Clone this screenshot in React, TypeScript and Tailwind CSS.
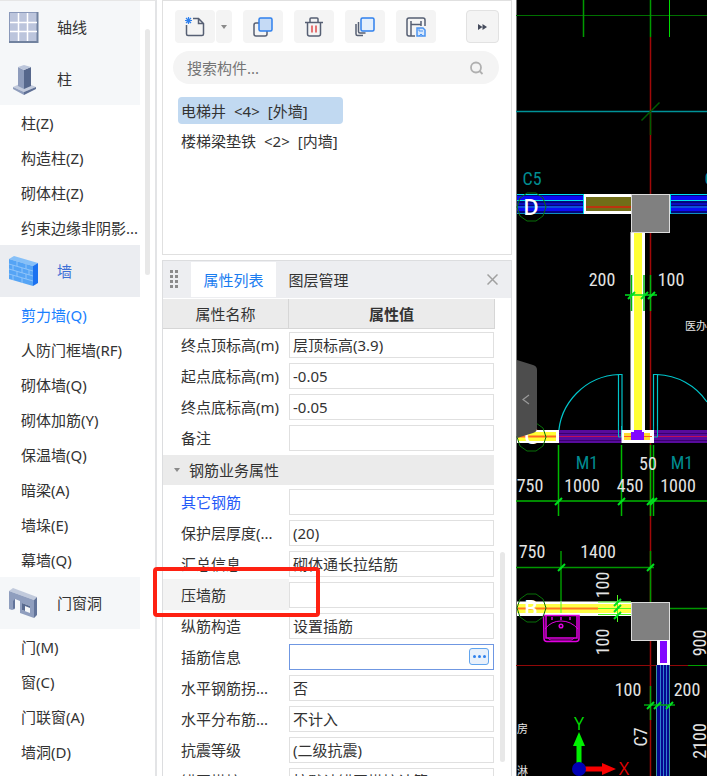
import React, {useState} from 'react';
import classNames from "clsx";

interface IItem {
    name: string;
    tags: string[];
}

interface IGroup {
    title: string;
    icon?: React.ReactNode;
    items: string[];
}

interface IProperty {
    label: string;
    value: string;
    kind?: 'link' | 'hover' | 'active';
}

const GridIcon: React.FC = () => (
    <svg width="30" height="32" viewBox="0 0 30 32">
        <rect x="0.5" y="1.5" width="28" height="29" fill="#bcc5dc" stroke="#8a99ba"/>
        <path d="M28.5 1v30H0" fill="none" stroke="#71829f" strokeWidth="2"/>
        <path d="M9.500 2v28M18.500 2v28M1 11.500h27M1 20.500h27" stroke="#fff" strokeWidth="1.500"/>
    </svg>
);

const ColumnIcon: React.FC = () => (
    <svg width="30" height="32" viewBox="0 0 30 32">
        <path d="M4 24l11-5 12 5-12 5z" fill="#c3cbdd"/>
        <path d="M4 24l11 5v3L4 26z" fill="#8f9dbc"/>
        <path d="M27 24l-12 5v3l12-6z" fill="#5f7095"/>
        <path d="M9 4l6 3v19l-6-3z" fill="#8e9cbc"/>
        <path d="M22 4l-7 3v19l7-3z" fill="#56678c"/>
        <path d="M9 4l6-2 7 2-7 3z" fill="#bcc6db"/>
    </svg>
);

const WallIcon: React.FC = () => (
    <svg width="30" height="32" viewBox="0 0 30 32">
        <path d="M0 4l5-3 24 7-5 3z" fill="#86c0f8"/>
        <path d="M0 4l24 7v20L0 24z" fill="#55a4f5"/>
        <path d="M24 11l5-3v20l-5 3z" fill="#1c72f0"/>
        <path d="M0 9l24 7M0 14l24 7M0 19l24 7M8 6v5M17 9v5M4 10v5M13 13v5M20 15v5M8 16v5M17 19v5M4 20v5M13 23v5" stroke="#8fc4fa" strokeWidth="1" fill="none"/>
    </svg>
);

const OpeningIcon: React.FC = () => (
    <svg width="30" height="32" viewBox="0 0 30 32">
        <path d="M0 4l4-3 24 9-3 3z" fill="#c1cadc"/>
        <path d="M0 4l25 9v18l-14-5V14l-5-2v10l-3 1-3-1z" fill="#8f9ebe"/>
        <path d="M25 13l3-3v18l-3 3zM6 12l-2 2v8l2-1z" fill="#62749a"/>
        <path d="M13 16l8 3v7l-8-3z" fill="#f5f7f9"/>
        <path d="M13 16l8 3v2l-5-2v5l-3-1z" fill="#596b90"/>
    </svg>
);

const groups: IGroup[] = [
    {title: '轴线', icon: <GridIcon/>, items: []},
    {title: '柱', icon: <ColumnIcon/>, items: ['柱(Z)', '构造柱(Z)', '砌体柱(Z)', '约束边缘非阴影...']},
    {
        title: '墙', icon: <WallIcon/>,
        items: ['剪力墙(Q)', '人防门框墙(RF)', '砌体墙(Q)', '砌体加筋(Y)', '保温墙(Q)', '暗梁(A)', '墙垛(E)', '幕墙(Q)']
    },
    {title: '门窗洞', icon: <OpeningIcon/>, items: ['门(M)', '窗(C)', '门联窗(A)', '墙洞(D)']},
];

const levels: IProperty[] = [
    {label: '终点顶标高(m)', value: '层顶标高(3.9)'},
    {label: '起点底标高(m)', value: '-0.05'},
    {label: '终点底标高(m)', value: '-0.05'},
    {label: '备注', value: ''},
];

const rebar: IProperty[] = [
    {label: '其它钢筋', value: '', kind: 'link'},
    {label: '保护层厚度(...', value: '(20)'},
    {label: '汇总信息', value: '砌体通长拉结筋'},
    {label: '压墙筋', value: '', kind: 'hover'},
    {label: '纵筋构造', value: '设置插筋'},
    {label: '插筋信息', value: '', kind: 'active'},
    {label: '水平钢筋拐...', value: '否'},
    {label: '水平分布筋...', value: '不计入'},
    {label: '抗震等级', value: '(二级抗震)'},
    {label: '锚固搭接', value: '按默认锚固搭接计算'},
];

const Sidebar: React.FC = () => {
    const [current, setCurrent] = useState('剪力墙(Q)');

    return (
        <nav className="flex w-[157px] shrink-0 border-t border-r-2 border-t-[#e6e6e6] border-r-[#e3e4e6]">
            <div className="w-[140px]">
                {groups.map(group => {
                    const active = group.items.includes(current);
                    return (
                        <div key={group.title}>
                            <button className={classNames('flex h-[52px] w-full items-center gap-[18px] pl-[9px]', {
                                'bg-[#ebedf1] text-[#3c6fd6]': active,
                                'bg-[#f5f7f9]': !active
                            })}>
                                {group.icon}
                                {group.title}
                            </button>
                            {group.items.map(item => (
                                <button
                                    key={item}
                                    onClick={() => setCurrent(item)}
                                    className={classNames('block h-[35px] w-full pl-[21px] text-left whitespace-nowrap', {
                                        'text-[#1a7fff]': item === current
                                    })}>
                                    {item}
                                </button>
                            ))}
                        </div>
                    )
                })}
            </div>
            <div className="mt-7 ml-[5px] h-[246px] w-[5px] rounded-full bg-[#e8e8e8]"/>
        </nav>
    )
};

const toolButton = 'flex h-[33px] w-10 items-center justify-center rounded bg-[#f4f4f4]';

const Toolbar: React.FC = () => (
    <div className="flex items-center gap-[11px]">
        <div className="flex gap-px">
            <button aria-label="新建" className={toolButton}>
                <svg width="20" height="20" viewBox="0 0 20 20" fill="none">
                    <path d="M1.500 8v9q0 1.500 1.500 1.500h14q1.500 0 1.500-1.500V6.500L13.500 1.500H8M13.500 1.500v5h5" stroke="#565f73" strokeWidth="1.500"/>
                    <path d="M3.500 0v7M0 3.500h7M1 1l5 5M6 1L1 6" stroke="#2f80ed" strokeWidth="1.200"/>
                </svg>
            </button>
            <button aria-label="新建选项" className="flex h-[33px] w-4 items-center justify-center rounded bg-[#f4f4f4]">
                <svg width="6" height="4" viewBox="0 0 6 4"><path d="M0 0h6L3 4z" fill="#8a8a8a"/></svg>
            </button>
        </div>
        <button aria-label="复制" className={toolButton}>
            <svg width="20" height="20" viewBox="0 0 20 20" fill="none" strokeWidth="1.500">
                <rect x="1" y="6" width="13" height="13" rx="2" stroke="#565f73"/>
                <rect x="6" y="1" width="13" height="13" rx="1.500" fill="#c5daf5" stroke="#2f80ed"/>
            </svg>
        </button>
        <button aria-label="删除" className={toolButton}>
            <svg width="18" height="20" viewBox="0 0 18 20" fill="none" strokeWidth="1.500">
                <path d="M0 5.500h18M5 5V2q0-1 1-1h6q1 0 1 1v3M2.500 5.500V17q0 2 2 2h9q2 0 2-2V5.500" stroke="#565f73"/>
                <path d="M7 8.500v7M11 8.500v7" stroke="#e04848"/>
            </svg>
        </button>
        <button aria-label="层间复制" className={toolButton}>
            <svg width="20" height="20" viewBox="0 0 20 20" fill="none" strokeWidth="1.500">
                <path d="M1 7v10q0 1.500 1.500 1.500H8M3.500 5v9.500q0 1.500 1.500 1.500h5.500" stroke="#565f73"/>
                <rect x="6" y="1" width="13" height="13" rx="1.500" fill="#e4effc" stroke="#2f80ed"/>
            </svg>
        </button>
        <button aria-label="存档" className={toolButton}>
            <svg width="20" height="20" viewBox="0 0 20 20" fill="none" strokeWidth="1.500">
                <path d="M9 19H3q-2 0-2-2V3q0-2 2-2h14q2 0 2 2v6M5 4v15M5 7.500h10M15 4v5" stroke="#565f73"/>
                <path d="M11 11h6l2 2v6h-8z" fill="#d8e8fc" stroke="#4a93f0"/>
                <path d="M13 11v3h4M13 19l2-2 2 2" stroke="#4a93f0" strokeWidth="1"/>
            </svg>
        </button>
        <button aria-label="更多" className="ml-auto flex h-[33px] w-[33px] items-center justify-center rounded border border-[#e2e2e2] bg-[#f4f4f4]">
            <svg width="9" height="6" viewBox="0 0 9 6"><path d="M0 0l4.500 3L0 6zM4.500 0L9 3 4.500 6z" fill="#454b5c"/></svg>
        </button>
    </div>
);

const components: IItem[] = [
    {name: '电梯井', tags: ['<4>', '[外墙]']},
    {name: '楼梯梁垫铁', tags: ['<2>', '[内墙]']},
];

const ComponentList: React.FC = () => {
    const [selected, setSelected] = useState('电梯井');

    return (
        <section className="h-[255px] shrink-0 border border-[#e0e0e0] px-3 pt-[9px]">
            <Toolbar/>
            <label className="mt-2 -ml-0.5 flex h-[33px] items-center rounded-full bg-[#f4f4f4] pr-[15px] pl-[14px]">
                <input
                    aria-label="搜索构件"
                    placeholder="搜索构件..."
                    className="min-w-0 flex-1 bg-transparent outline-none placeholder:text-[#757575]"/>
                <svg width="14" height="14" viewBox="0 0 14 14" fill="none" stroke="#b0b0b0" strokeWidth="1.800">
                    <circle cx="6" cy="6.500" r="5"/>
                    <path d="M9.500 10l3 3"/>
                </svg>
            </label>
            <ul className="mt-[13px] ml-[3px] w-[165px]">
                {components.map(item => (
                    <li key={item.name}>
                        <button
                            onClick={() => setSelected(item.name)}
                            className={classNames('mb-[3px] flex h-[27px] w-full items-center gap-2 rounded px-[3px] whitespace-nowrap', {
                                'bg-[#c1d9f1]': item.name === selected
                            })}>
                            <span>{item.name}</span>
                            {item.tags.map(tag => <span key={tag}>{tag}</span>)}
                        </button>
                    </li>
                ))}
            </ul>
        </section>
    )
};

const PropertyRow: React.FC<{ property: IProperty }> = ({property}) => {
    const {label, value, kind} = property;
    return (
        <tr className="h-[31px]">
            <th className={classNames('relative pl-[18px] text-left font-normal whitespace-nowrap', {
                'bg-[#f3f3f3]': kind === 'hover',
                'text-[#2458f8]': kind === 'link'
            })}>
                <label htmlFor={label}>{label}</label>
                {kind === 'hover' &&
                <div className="pointer-events-none absolute -top-3 -right-[31px] -bottom-[7px] -left-[10px] z-10 rounded border-4 border-[#fe2112]"/>}
            </th>
            <td className="relative pr-px">
                <input
                    id={label}
                    defaultValue={value}
                    className={classNames('block h-[26px] w-full border bg-white px-[3px] outline-none', {
                        'border-[#6f97e2]': kind === 'active',
                        'border-[#e0e0e0]': kind !== 'active'
                    })}/>
                {kind === 'active' &&
                <button aria-label="更多设置" className="absolute top-[7px] right-[6px] flex h-[17px] w-5 items-center justify-center gap-[2px] rounded-[3px] border border-[#62a5ee] bg-[#e8f0fb]">
                    <i className="h-[3px] w-[3px] rounded-full bg-[#2f80ed]"/>
                    <i className="h-[3px] w-[3px] rounded-full bg-[#2f80ed]"/>
                    <i className="h-[3px] w-[3px] rounded-full bg-[#2f80ed]"/>
                </button>}
            </td>
        </tr>
    )
};

const PropertyPanel: React.FC = () => (
    <section className="mt-[5px] flex-1 border border-[#dcdddf]">
        <div className="flex h-[37px] items-center bg-[#edeef1] pl-[7px]">
            <svg width="10" height="19" viewBox="0 0 10 19" fill="#8b8b8b">
                {[0, 5, 10, 15].map(y => (
                    <React.Fragment key={y}>
                        <rect x="0" y={y} width="3" height="3"/>
                        <rect x="5" y={y} width="3" height="3"/>
                    </React.Fragment>
                ))}
            </svg>
            <button className="ml-[11px] h-[35px] w-[85px] bg-white text-[#1a7cf0]">属性列表</button>
            <button className="h-[35px] w-[85px]">图层管理</button>
            <button aria-label="关闭" className="mr-[13px] ml-auto">
                <svg width="11" height="11" viewBox="0 0 11 11" stroke="#a0a0a0" strokeWidth="1.500"><path d="M0.500 0.500l10 10M10.500 0.500l-10 10"/></svg>
            </button>
        </div>
        <div className="flex pt-px">
            <table className="flex-1 table-fixed border-separate border-spacing-0">
                <colgroup>
                    <col className="w-[126px]"/>
                    <col/>
                </colgroup>
                <thead>
                <tr className="h-[30px] bg-[#ebebeb]">
                    <th className="border-r border-b border-[#d6d6d6] font-normal">属性名称</th>
                    <th className="border-r border-b border-[#d6d6d6] font-bold">属性值</th>
                </tr>
                </thead>
                <tbody>
                {levels.map(property => <PropertyRow key={property.label} property={property}/>)}
                <tr className="h-[33px]">
                    <td colSpan={2} className="pr-px">
                        <button className="flex h-[30px] w-full items-center gap-[9px] bg-[#ebebeb] pl-[11px]">
                            <svg width="6" height="4" viewBox="0 0 6 4"><path d="M0 0h6L3 4z" fill="#8a8a8a"/></svg>
                            钢筋业务属性
                        </button>
                    </td>
                </tr>
                {rebar.map(property => <PropertyRow key={property.label} property={property}/>)}
                </tbody>
            </table>
            <div className="w-4 pt-[253px] pl-[5px]">
                <div className="h-[210px] w-[5px] rounded-full bg-[#e8e8e8]"/>
            </div>
        </div>
    </section>
);

// short slanted ticks where a dimension line meets an extension line
const Ticks: React.FC<{ points: number[][] }> = ({points}) => (
    <g stroke="#00e020" strokeWidth="2">
        {points.map(([x, y]) => <path key={`${x}-${y}`} d={`M${x - 3} ${y + 4}l7 -7`}/>)}
    </g>
);

const WindowWall: React.FC<{ x: number, width: number }> = ({x, width}) => (
    <g>
        <rect x={x} y="194" width={width} height="20" fill="#05057c"/>
        <rect x={x} y="196" width={width} height="4" fill="#0c0cf5"/>
        <rect x={x} y="203" width={width} height="2" fill="#0c0cc0"/>
        <rect x={x} y="206" width={width} height="5" fill="#0c0cf5"/>
        <path d={`M${x} 194.500h${width}M${x} 200.500h${width}`} stroke="#00e0f0"/>
        <path d={`M${x} 207h${width}M${x} 213.500h${width}`} stroke="#0c8fc0"/>
    </g>
);

const axisCircle = 'M527 193l9 0 7 5 3 9-3 9-7 5h-9l-7-5-3-9 3-9z';

const Drawing: React.FC = () => (
    <svg className="block h-full w-full" viewBox="516 0 191 776" preserveAspectRatio="xMinYMin slice" fill="none">
        <path d="M516.500 0v776" stroke="#777"/>
        <path d="M650.500 37v739" stroke="#a00808" strokeWidth="1.500"/>
        <path d="M516 15.500h191" stroke="#007000"/>
        <path d="M583.500 0v37M650.500 0v37" stroke="#009a00" strokeWidth="1.500"/>
        <path d="M669.500 0v37" stroke="#00dc00"/>
        <path d="M516 111.500h191" stroke="#009298" strokeWidth="1.500"/>
        <path d="M641.500 120.500l18-18M650.500 113v22" stroke="#005c00" strokeWidth="1.500"/>

        <WindowWall x={517} width={67}/>
        <WindowWall x={670} width={37}/>
        <path d="M583.500 194v20M670.500 194v20" stroke="#00e0f0"/>
        <rect x="584" y="194" width="48" height="20" fill="#fff"/>
        <rect x="586" y="197" width="45" height="14" fill="#706e18"/>
        <path d="M586 207h45" stroke="#bc3410" strokeWidth="2"/>

        {/* vertical wall */}
        <rect x="630.500" y="232" width="14.500" height="200" fill="#fff"/>
        <rect x="634" y="233" width="8" height="200" fill="#ffff35"/>
        <rect x="631.500" y="194.500" width="38" height="38" fill="#808080" stroke="#dcdcdc"/>
        <path d="M631.500 275v36M644 275v36M650.500 275v36" stroke="#00b510" strokeWidth="1.500"/>
        <path d="M625 295h32" stroke="#00e020" strokeWidth="1.500"/>
        <Ticks points={[[631, 295], [644, 295], [651, 295]]}/>

        {/* doors */}
        <g stroke="#00c4ca" strokeWidth="1.200">
            <path d="M558.500 436A63 63 0 0 1 619 374.500h3V437M618.500 375v62h3"/>
            <path d="M707 402A63 63 0 0 0 657 374.500h-3.500V437h4v-62"/>
        </g>
        <rect x="517" y="430" width="42" height="13" fill="#fff"/>
        <rect x="518" y="432" width="38" height="9" fill="#ffff35"/>
        <path d="M518 436.500h38" stroke="#ff6a20" strokeWidth="2"/>
        <g>
            <rect x="559" y="430" width="63" height="13" fill="#570b9c"/>
            <rect x="654" y="430" width="53" height="13" fill="#570b9c"/>
            <path d="M559 433.500h63M559 440.500h63M654 433.500h53M654 440.500h53" stroke="#39006c"/>
            <path d="M559 436.500h63M654 436.500h53" stroke="#c00c58"/>
        </g>
        <path d="M618.500 426v11h3V426M653.500 426v11h4V426" stroke="#00bcc2"/>
        <rect x="621.500" y="430" width="32.500" height="13" fill="#fff"/>
        <path d="M624 436.500h26" stroke="#ffdc30" strokeWidth="7"/>
        <path d="M624 436.500h28" stroke="#ff5a20"/>
        <path d="M634 430h8v2h2v8h-13v-8h3z" fill="#8208ff"/>

        {/* dimension rows */}
        <path d="M558.500 445v71M621.500 445v71M650.500 445v71M653.500 445v71M516 501h191" stroke="#00b800" strokeWidth="1.500"/>
        <Ticks points={[[558, 501], [621, 501], [650, 501], [653, 501]]}/>
        <path d="M516 567.500h138M561 551v62M650.500 551v51M670 608.500h37" stroke="#009600" strokeWidth="1.500"/>
        <Ticks points={[[561, 567], [650, 567]]}/>

        <rect x="517" y="601.500" width="114" height="14.500" fill="#fff"/>
        <rect x="517" y="604" width="114" height="9" fill="#ffff45"/>
        <path d="M517 608.500h81" stroke="#ff7820" strokeWidth="2"/>
        <path d="M598 602h33M598 608.500h33M598 614.500h33M617.500 595v27M561 602v11" stroke="#50f820"/>
        <Ticks points={[[617, 602], [617, 608], [617, 615]]}/>
        <rect x="631.500" y="602.500" width="38" height="38" fill="#808080" stroke="#dcdcdc"/>

        {/* wash basin */}
        <g stroke="#e000e0" strokeWidth="1.500">
            <path d="M543.500 615.500h35.500v23q0 3-3 3h-29q-3 0-3-3zM546 616v22h31v-22"/>
            <path d="M545 629q6-8 16-8t17 8M548 638q1 2 3 2h20q2 0 3-2" strokeWidth="1"/>
            <circle cx="561" cy="626" r="1.800"/>
            <path d="M552 617v3M561 617v3M570 617v3"/>
        </g>

        <path d="M516 665.500h191" stroke="#900808"/>
        <path d="M688 665.500h19" stroke="#00a000"/>
        <rect x="657" y="640" width="13" height="25" fill="#fff"/>
        <rect x="660" y="641" width="7" height="22" fill="#8208ff"/>
        <rect x="656" y="665" width="14" height="111" fill="#060690"/>
        <path d="M656.500 665v111M669.500 665v111" stroke="#3990a0"/>
        <path d="M660.500 665v111M663.500 665v111M666.500 665v111" stroke="#2e7ed0"/>
        <path d="M650.500 686v34M644 705h31" stroke="#00a510" strokeWidth="1.500"/>
        <Ticks points={[[650, 705], [657, 705], [669, 705]]}/>

        {/* axis bubbles */}
        <g stroke="#087008">
            <path d={axisCircle}/>
            <path d={axisCircle} transform="translate(0 230)"/>
            <path d={axisCircle} transform="translate(0 401)"/>
        </g>
        <g fill="#fff" fontFamily='"Open Sans", sans-serif' fontSize="21" fontWeight="600" textAnchor="middle">
            <text x="531" y="215">D</text>
            <text x="531" y="444">C</text>
            <text x="531" y="616">B</text>
        </g>

        <g fontFamily='"Liberation Sans Narrow", "Roboto Condensed", "DejaVu Sans Condensed", sans-serif' fontSize="18" textAnchor="middle" fill="#e4e4e4">
            <g fill="#008c90">
                <text x="532" y="185">C5</text>
                <text x="714" y="185">C5</text>
                <text x="587" y="469">M1</text>
                <text x="682" y="469">M1</text>
            </g>
            <text x="602" y="286">200</text>
            <text x="671" y="286">100</text>
            <text x="648" y="470">50</text>
            <text x="530" y="492">750</text>
            <text x="582" y="492">1000</text>
            <text x="630" y="492">450</text>
            <text x="678" y="492">1000</text>
            <text x="532" y="558">750</text>
            <text x="598" y="558">1400</text>
            <text x="628" y="696">100</text>
            <text x="687" y="696">200</text>
            <text transform="translate(609 585) rotate(-90)">100</text>
            <text transform="translate(609 642) rotate(-90)">100</text>
            <text transform="translate(647 737) rotate(-90)">C7</text>
            <text transform="translate(706 643) rotate(-90)">900</text>
            <text transform="translate(706 741) rotate(-90)">2100</text>
        </g>
        <g fill="#e4e4e4" fontFamily='"Noto Sans CJK SC", sans-serif' fontSize="11">
            <text x="685" y="330">医办</text>
            <text x="517" y="733">房</text>
            <text x="517" y="775">淋</text>
        </g>

        {/* coordinate axes */}
        <path d="M579 732l6 14h-3.500v20h-5v-20H573z" fill="#00f000"/>
        <path d="M616 769l-14 6v-3.500h-20v-5h20V763z" fill="#f80000"/>
        <circle cx="579" cy="769" r="7" fill="#0000b4"/>
        <g fontFamily='"Open Sans", sans-serif' fontSize="18" textAnchor="middle">
            <text x="579" y="730" fill="#00d800">Y</text>
            <text x="624" y="775" fill="#e00000">X</text>
        </g>
    </svg>
);

const App: React.FC = () => {
    return (
        <div className="flex h-screen overflow-hidden bg-white font-['Noto_Sans','Noto_Sans_CJK_SC',sans-serif] text-[15px] leading-5 text-[#333]">
            <Sidebar/>
            <main className="ml-[5px] flex w-[350px] shrink-0 flex-col">
                <ComponentList/>
                <PropertyPanel/>
            </main>
            <div className="relative ml-1 min-w-0 flex-1 overflow-hidden bg-black">
                <Drawing/>
                <button aria-label="收起" className="absolute top-[359px] left-px">
                    <svg width="20" height="80" viewBox="0 0 20 80" fill="none">
                        <path d="M0 1l16 5q4 1 4 5v58q0 4-4 5L0 79z" fill="#4d4d4d"/>
                        <path d="M12 36l-6 4.500 6 4.500" stroke="#9a9a9a" strokeWidth="1.200"/>
                    </svg>
                </button>
            </div>
        </div>
    )
};

export default App;
